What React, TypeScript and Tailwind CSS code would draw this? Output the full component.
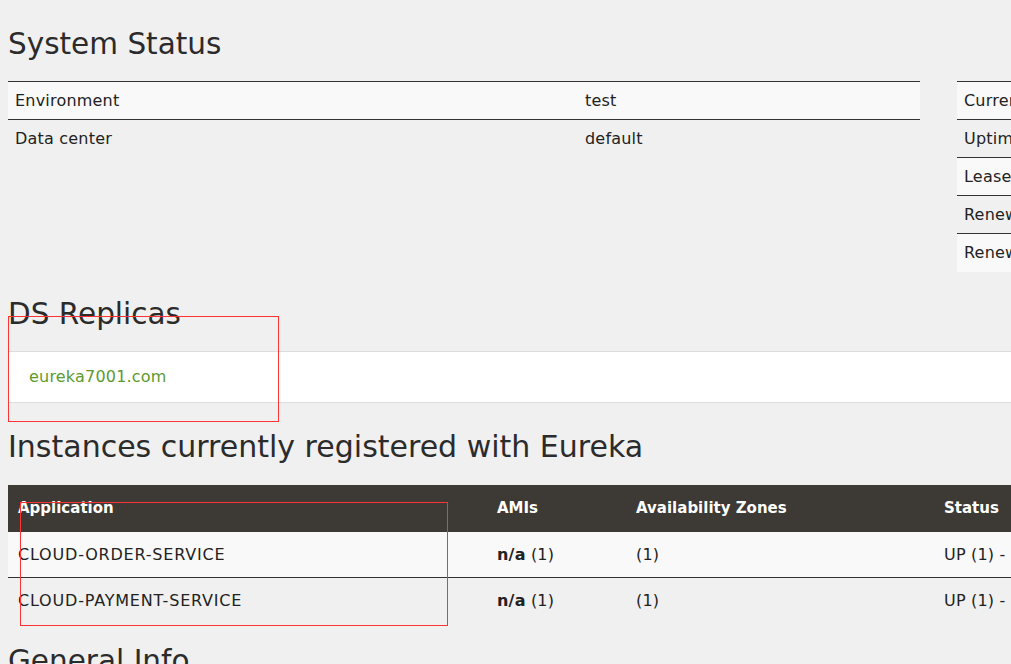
import React from "react";

const body = { fontFamily: '"DejaVu Sans", "Open Sans", sans-serif' };
const head = { fontFamily: '"DejaVu Sans", "Open Sans", sans-serif' };

const leftRows = [
  ["Environment", "test"],
  ["Data center", "default"],
];

const rightRows = [
  ["Current time", "2024-01-01T10:00:00 +0800"],
  ["Uptime", "00:05"],
  ["Lease expiration enabled", "false"],
  ["Renews threshold", "5"],
  ["Renews (last min)", "8"],
];

const instances = [
  { app: "CLOUD-ORDER-SERVICE", status: "UP (1) - localhost:cloud-order-service:8001" },
  { app: "CLOUD-PAYMENT-SERVICE", status: "UP (1) - localhost:cloud-payment-service:8002" },
];

function InfoTable({ rows, first }: { rows: string[][]; first: number }) {
  return (
    <div className="w-[912px] border-t border-[#333]">
      {rows.map((r, i) => (
        <div
          key={r[0]}
          className={`flex h-[38px] items-center text-[16px] tracking-[0.2px] text-[#222] ${
            i % 2 === 0 ? "bg-[#f9f9f9]" : ""
          } ${i < rows.length - 1 ? "border-b border-[#333]" : ""}`}
        >
          <div className="pl-[7px]" style={{ width: first }}>
            {r[0]}
          </div>
          <div className="pl-[7px]">{r[1]}</div>
        </div>
      ))}
    </div>
  );
}

export default function App() {
  return (
    <div className="relative w-[1011px] h-[664px] overflow-hidden bg-[#f0f0f0]" style={body}>
      <div className="w-[1900px] pl-[8px]">
        {/* System status */}
        <h1 className="text-[29.5px] leading-[34px] text-[#2b2b2b] pt-[27px]" style={head}>
          System Status
        </h1>
        <div className="flex gap-[37px] mt-[20px]">
          <InfoTable rows={leftRows} first={570} />
          <InfoTable rows={rightRows} first={380} />
        </div>

        {/* DS replicas */}
        <h2 className="text-[29.5px] leading-[34px] text-[#2b2b2b] mt-[25px]" style={head}>
          DS Replicas
        </h2>
        <div className="mt-[20px] h-[52px] bg-white border-y border-[#ddd] flex items-center pl-[21px] text-[16px] tracking-[0.2px] text-[#5d9a2e]">
          eureka7001.com
        </div>

        {/* Instances */}
        <h2 className="text-[30px] leading-[34px] text-[#2b2b2b] mt-[27px]" style={head}>
          Instances currently registered with Eureka
        </h2>
        <div className="mt-[21px] w-[1890px] text-[16px] tracking-[0.2px]">
          <div className="flex h-[47px] items-center bg-[#3d3934] text-white font-bold text-[15px] tracking-normal">
            <div className="w-[479px] pl-[10px]">Application</div>
            <div className="w-[139px] pl-[10px]">AMIs</div>
            <div className="w-[308px] pl-[10px]">Availability Zones</div>
            <div className="pl-[10px]">Status</div>
          </div>
          {instances.map((row, i) => (
            <div
              key={row.app}
              className={`flex h-[46px] items-center text-[#222] ${
                i === 0 ? "bg-[#f9f9f9] border-b border-[#333]" : ""
              }`}
            >
              <div className="w-[479px] pl-[10px] tracking-[0.8px]">{row.app}</div>
              <div className="w-[139px] pl-[10px]">
                <b>n/a</b> (1)
              </div>
              <div className="w-[308px] pl-[10px]">(1)</div>
              <div className="pl-[10px]">{row.status}</div>
            </div>
          ))}
        </div>

        <h2 className="text-[29.5px] leading-[34px] text-[#2b2b2b] mt-[20px]" style={head}>
          General Info
        </h2>
      </div>

      {/* annotation boxes */}
      <div className="absolute left-[8px] top-[316px] w-[271px] h-[106px] border border-[#f33]" />
      <div className="absolute left-[20px] top-[502px] w-[428px] h-[124px] border border-[#f33]" />
    </div>
  );
}
